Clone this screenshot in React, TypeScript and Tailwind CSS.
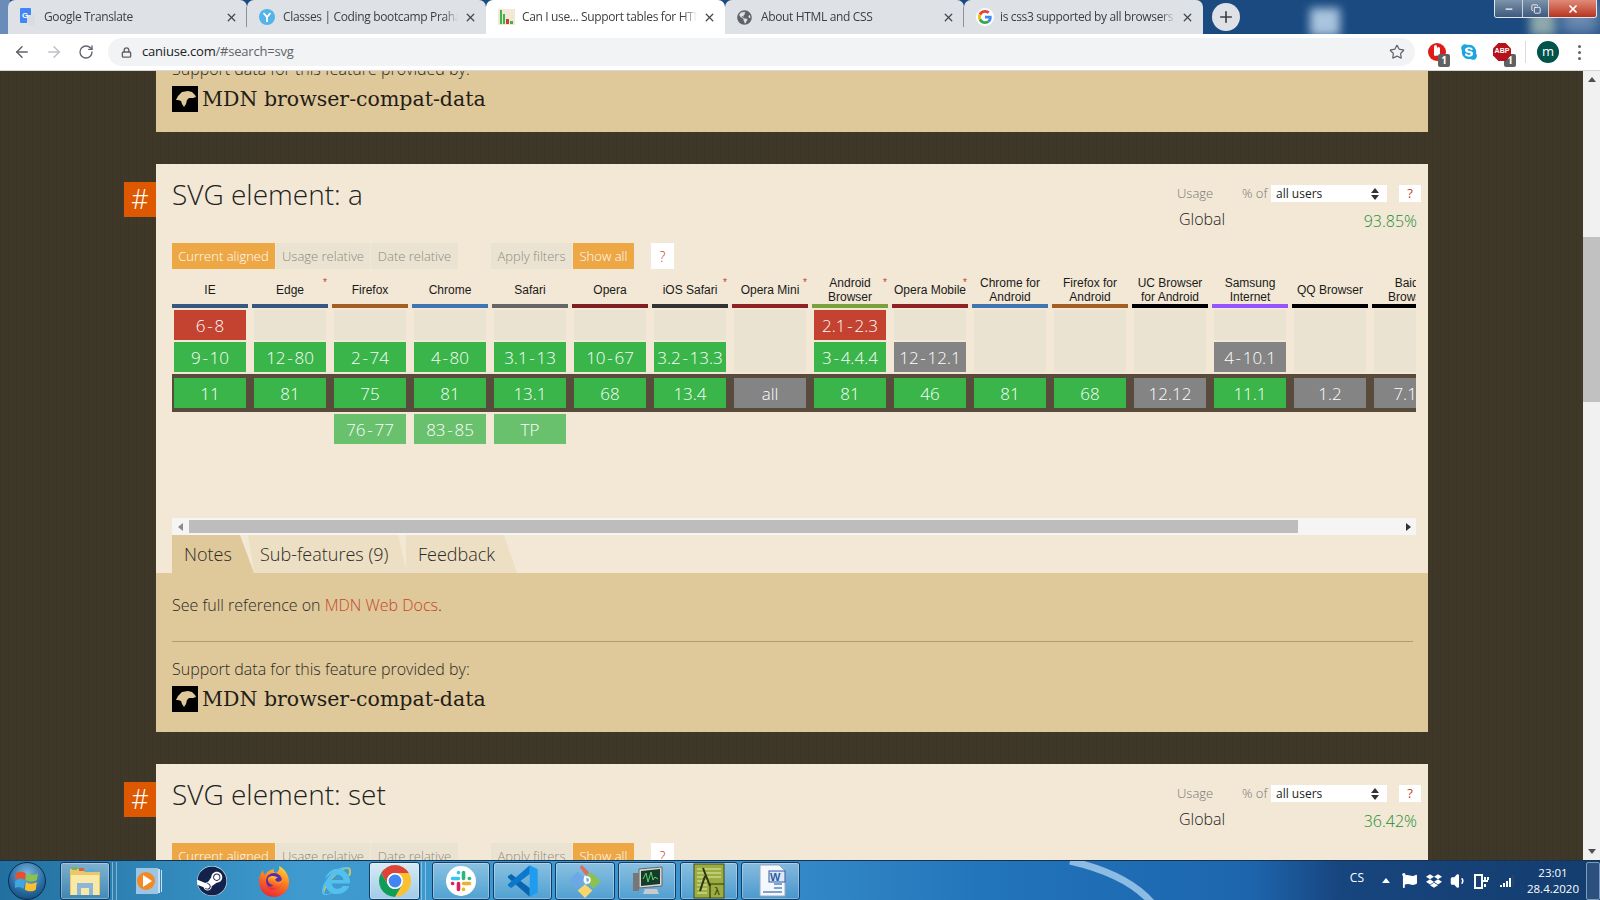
import React from 'react';
import { ArrowLeft, ArrowRight, RotateCw, Lock, Star, X, Plus, Minus, Copy, Volume1 } from 'lucide-react';
import { FaSteam, FaInternetExplorer, FaSkype, FaGlobeAmericas, FaDropbox, FaFlag } from 'react-icons/fa';

type CellKind = 'y' | 'n' | 'u' | 'f';
type Cell = { t: string; k: CellKind };

interface Browser {
  name: string[];
  bar: string;
  star?: boolean;
  past: Cell[];
  current: Cell;
  future?: Cell;
}

const browsers: Browser[] = [
  { name: ['IE'], bar: 'bg-[#375782]', past: [{ t: '6-8', k: 'n' }, { t: '9-10', k: 'y' }], current: { t: '11', k: 'y' } },
  { name: ['Edge'], bar: 'bg-[#375782]', star: true, past: [{ t: '12-80', k: 'y' }], current: { t: '81', k: 'y' } },
  { name: ['Firefox'], bar: 'bg-[#a35e24]', past: [{ t: '2-74', k: 'y' }], current: { t: '75', k: 'y' }, future: { t: '76-77', k: 'f' } },
  { name: ['Chrome'], bar: 'bg-[#4075b2]', past: [{ t: '4-80', k: 'y' }], current: { t: '81', k: 'y' }, future: { t: '83-85', k: 'f' } },
  { name: ['Safari'], bar: 'bg-[#666666]', past: [{ t: '3.1-13', k: 'y' }], current: { t: '13.1', k: 'y' }, future: { t: 'TP', k: 'f' } },
  { name: ['Opera'], bar: 'bg-[#7f1f1f]', past: [{ t: '10-67', k: 'y' }], current: { t: '68', k: 'y' } },
  { name: ['iOS Safari'], bar: 'bg-[#333333]', star: true, past: [{ t: '3.2-13.3', k: 'y' }], current: { t: '13.4', k: 'y' } },
  { name: ['Opera Mini'], bar: 'bg-[#8f2323]', star: true, past: [], current: { t: 'all', k: 'u' } },
  { name: ['Android', 'Browser'], bar: 'bg-[#7ba13c]', star: true, past: [{ t: '2.1-2.3', k: 'n' }, { t: '3-4.4.4', k: 'y' }], current: { t: '81', k: 'y' } },
  { name: ['Opera Mobile'], bar: 'bg-[#8f2323]', star: true, past: [{ t: '12-12.1', k: 'u' }], current: { t: '46', k: 'y' } },
  { name: ['Chrome for', 'Android'], bar: 'bg-[#4075b2]', past: [], current: { t: '81', k: 'y' } },
  { name: ['Firefox for', 'Android'], bar: 'bg-[#a35e24]', past: [], current: { t: '68', k: 'y' } },
  { name: ['UC Browser', 'for Android'], bar: 'bg-black', past: [], current: { t: '12.12', k: 'u' } },
  { name: ['Samsung', 'Internet'], bar: 'bg-[#9654ff]', past: [{ t: '4-10.1', k: 'u' }], current: { t: '11.1', k: 'y' } },
  { name: ['QQ Browser'], bar: 'bg-black', past: [], current: { t: '1.2', k: 'u' } },
  { name: ['Baidu', 'Browser'], bar: 'bg-black', past: [], current: { t: '7.12', k: 'u' } },
];

const cellBg: Record<CellKind, string> = {
  y: 'bg-[#39b54a]',
  n: 'bg-[#c44230]',
  u: 'bg-[#848484]',
  f: 'bg-[#69c16e]',
};

function TranslateIcon() {
  return (
    <svg width="16" height="18" viewBox="0 0 16 18">
      <rect x="0" y="0" width="11" height="15" rx="1" fill="#4285f4" />
      <rect x="7" y="7" width="8" height="10" fill="#dadce0" />
      <text x="2" y="10" fontSize="8" fontWeight="700" fill="#fff" fontFamily="Liberation Sans">G</text>
    </svg>
  );
}

function YIcon() {
  return (
    <svg width="16" height="16" viewBox="0 0 16 16">
      <circle cx="8" cy="8" r="8" fill="#54b4e8" />
      <path d="M4.5 4 8 8.2 11.5 4M8 8v5" stroke="#fff" strokeWidth="1.8" fill="none" />
    </svg>
  );
}

function CaniuseIcon() {
  return (
    <svg width="17" height="16" viewBox="0 0 17 16">
      <rect width="17" height="16" fill="#f2e8d5" />
      <rect x="2" y="1" width="2" height="14" fill="#39b54a" />
      <rect x="5" y="5" width="2" height="10" fill="#39b54a" />
      <rect x="8" y="10" width="3" height="5" fill="#c44230" />
      <rect x="12" y="12" width="3" height="3" fill="#39b54a" />
    </svg>
  );
}

function GoogleIcon() {
  return (
    <span className="flex h-[18px] w-[18px] items-center justify-center rounded-full bg-white">
      <svg width="14" height="14" viewBox="0 0 48 48">
        <path fill="#EA4335" d="M24 9.5c3.54 0 6.71 1.22 9.21 3.6l6.85-6.85C35.9 2.38 30.47 0 24 0 14.62 0 6.51 5.38 2.56 13.22l7.98 6.19C12.43 13.72 17.74 9.5 24 9.5z" />
        <path fill="#4285F4" d="M46.98 24.55c0-1.57-.15-3.09-.38-4.55H24v9.02h12.94c-.58 2.96-2.26 5.48-4.78 7.18l7.73 6c4.51-4.18 7.09-10.36 7.09-17.65z" />
        <path fill="#FBBC05" d="M10.53 28.59c-.48-1.45-.76-2.99-.76-4.59s.27-3.14.76-4.59l-7.98-6.19C.92 16.46 0 20.12 0 24c0 3.88.92 7.54 2.56 10.78l7.97-6.19z" />
        <path fill="#34A853" d="M24 48c6.48 0 11.93-2.13 15.89-5.81l-7.73-6c-2.15 1.45-4.92 2.3-8.16 2.3-6.26 0-11.57-4.22-13.47-9.91l-7.98 6.19C6.51 42.62 14.62 48 24 48z" />
      </svg>
    </span>
  );
}

const tabs = [
  { title: 'Google Translate', icon: <TranslateIcon /> },
  { title: 'Classes | Coding bootcamp Praha', icon: <YIcon /> },
  { title: 'Can I use... Support tables for HTML5', icon: <CaniuseIcon />, active: true },
  { title: 'About HTML and CSS', icon: <FaGlobeAmericas className="text-[15px] text-[#5f6368]" /> },
  { title: 'is css3 supported by all browsers', icon: <GoogleIcon /> },
];

function ChromeIcon() {
  return (
    <svg width="32" height="32" viewBox="4 4 40 40">
      <path fill="#db4437" d="M6.68 14A20 20 0 0 1 41.32 14H24A10 10 0 0 0 15.34 29Z" />
      <path fill="#fbc02d" d="M41.32 14A20 20 0 0 1 24 44L32.66 29A10 10 0 0 0 24 14Z" />
      <path fill="#0f9d58" d="M24 44A20 20 0 0 1 6.68 14L15.34 29A10 10 0 0 0 32.66 29Z" />
      <circle cx="24" cy="24" r="10" fill="#fff" />
      <circle cx="24" cy="24" r="8" fill="#4285f4" />
    </svg>
  );
}

function MdnIcon() {
  return (
    <span className="flex h-[26px] w-[26px] items-center justify-center bg-black">
      <svg width="21" height="18" viewBox="0 0 21 18">
        <path fill="#dfc89a" d="M1 10 3 6l4-4 6-1 4 1 3 3 1 2-3 1h-4l-2 2-1 4-2 3-2-3-1-3-3-1z" />
      </svg>
    </span>
  );
}

function WindowsOrb() {
  return (
    <span className="flex h-[38px] w-[38px] items-center justify-center rounded-full border border-[#0b2c50] bg-[radial-gradient(circle_at_50%_30%,#7fb6dc,#2a6fa6_55%,#0c3a63)]">
      <svg width="24" height="22" viewBox="0 0 22 20">
        <path fill="#e8502a" d="M1 3c3-2 6-2 9 0l-1 6c-3-2-6-2-9 0z" />
        <path fill="#8bc34a" d="M11 3c3 2 7 2 10 0l-1 6c-3 2-7 2-10 0z" />
        <path fill="#3fa7e0" d="M0 10c3-2 6-2 9 0l-1 7c-3-2-6-2-9 0z" />
        <path fill="#fbc02d" d="M10 11c3 2 6 2 10 0l-1 7c-3 2-6 2-10 0z" />
      </svg>
    </span>
  );
}

function FolderIcon() {
  return (
    <svg width="34" height="32" viewBox="0 0 34 32">
      <path fill="#e9c868" d="M2 4h12l3 3h15v23H2z" />
      <path fill="#f9e9a8" d="M3 10h28v20H3z" />
      <rect x="4" y="2" width="5" height="3" fill="#7fb05a" />
      <rect x="11" y="3" width="5" height="3" fill="#d9604a" />
      <rect x="21" y="4" width="5" height="3" fill="#5aa9e6" />
      <path fill="#8fb6d6" d="M9 18h16v12H9z" />
      <path fill="#f9e9a8" d="M13 23h8v7h-8z" />
    </svg>
  );
}

function MediaIcon() {
  return (
    <svg width="28" height="32" viewBox="0 0 28 32">
      <rect x="1" y="3" width="22" height="26" fill="#9cc5e4" />
      <rect x="23" y="4" width="2" height="24" fill="#c9e0f1" />
      <rect x="26" y="5" width="1" height="22" fill="#c9e0f1" />
      <circle cx="11" cy="16" r="9" fill="#f08a24" />
      <path d="M8 10v12l9-6z" fill="#fff" />
    </svg>
  );
}

function FirefoxIcon() {
  return (
    <svg width="30" height="32" viewBox="0 0 30 32">
      <defs>
        <linearGradient id="fx" x1="0.7" y1="0" x2="0.3" y2="1">
          <stop offset="0" stopColor="#ffd23a" />
          <stop offset="0.45" stopColor="#ff7a1f" />
          <stop offset="1" stopColor="#e5263a" />
        </linearGradient>
      </defs>
      <path fill="url(#fx)" d="M20 1c6 3 10 9 10 16 0 8-6 15-15 15S0 25 0 16C0 11 2 8 4 5c0 3 1 4 2 5 2-4 6-5 9-6-1 2 0 3 2 4 3-2 4-4 3-7z" />
      <circle cx="15" cy="16" r="8" fill="#5c2ba8" />
      <path fill="url(#fx)" d="M9 13c3-3 8-2 10 0-3 0-3 2-2 3 3 2 6 0 6-2 1 5-3 11-9 11-3 0-6-2-7-5 2 2 6 2 7 0-3 0-6-3-5-7z" />
    </svg>
  );
}

function IeIcon() {
  return (
    <span className="relative flex h-[32px] w-[32px] items-center justify-center">
      <svg className="absolute inset-0" width="32" height="32" viewBox="0 0 32 32" fill="none">
        <path d="M27 3C20 3 6 16 3 28" stroke="#e8c83a" strokeWidth="2" />
        <path d="M27 3c3 0 4 3 2 8" stroke="#e8c83a" strokeWidth="2" />
      </svg>
      <FaInternetExplorer className="relative text-[28px] text-[#54c0ee]" />
    </span>
  );
}

function SlackIcon() {
  return (
    <span className="flex h-[30px] w-[30px] items-center justify-center rounded-full bg-white">
      <svg width="22" height="22" viewBox="0 0 22 22" strokeWidth="3.6" strokeLinecap="round" fill="none">
        <path stroke="#36c5f0" d="M2.5 8.5h6M8.5 2.5v.2" />
        <path stroke="#2eb67d" d="M13.5 2.5v6M19.5 8.5h-.2" />
        <path stroke="#ecb22e" d="M19.5 13.5h-6M13.5 19.5v-.2" />
        <path stroke="#e01e5a" d="M8.5 19.5v-6M2.5 13.5h.2" />
      </svg>
    </span>
  );
}

function CodeIcon() {
  return (
    <svg width="32" height="32" viewBox="0 0 100 100">
      <polygon fill="#0865b0" points="3,40 3,35 13,28 71,72 71,99" />
      <polygon fill="#0a78cc" points="71,1 71,28 13,72 3,65 3,60" />
      <polygon fill="#1f9cf0" points="71,1 96,13 96,87 71,99" />
    </svg>
  );
}

function GitIcon() {
  return (
    <svg width="34" height="34" viewBox="0 0 32 32">
      <path fill="#d9705e" d="M11 3l2-2 7 7-3 3z" />
      <path fill="#6da7e8" d="M9 7l7 7-8 8-7-7z" />
      <path fill="#8cc152" d="M22 8l9 8-7 7-5-5c2-3 1-6-2-7z" />
      <path fill="#f5d76e" d="M16 19l7 6-7 7-7-7z" />
      <path d="M16 11l1 8" stroke="#fff" strokeWidth="1.6" />
      <circle cx="18" cy="15" r="2.6" fill="none" stroke="#fff" strokeWidth="1.6" />
    </svg>
  );
}

function MonitorIcon() {
  return (
    <svg width="32" height="32" viewBox="0 0 32 32">
      <path d="M8 4l23-2v19L8 23z" fill="#d8d8d8" stroke="#666" />
      <path d="M10 6l19-2v15l-19 2z" fill="#153b2a" />
      <path d="M12 14l3-6 2 9 3-10 2 8 2-3 3 2" stroke="#5fd36a" fill="none" />
      <rect x="2" y="8" width="6" height="18" fill="#777" />
      <path d="M14 24h12l2 5H12z" fill="#c9c9c9" />
    </svg>
  );
}

function LambdaIcon() {
  return (
    <svg width="32" height="36" viewBox="0 0 32 36">
      <rect x="1" y="1" width="30" height="34" fill="#9cac3f" stroke="#3e4a1c" />
      <path d="M4 6h24M4 10h24M4 14h24M4 18h10M4 22h10M4 26h10M4 30h10" stroke="#c8d68a" strokeWidth="1.6" />
      <path d="M10 5l7 18M12 13l-5 15" stroke="#2c3414" strokeWidth="2" fill="none" />
      <path d="M17 21v14M17 21h14" stroke="#2c3414" strokeWidth="1.2" />
      <text x="21" y="32" fontSize="10" fill="#2c3414" fontFamily="DejaVu Sans">λ</text>
    </svg>
  );
}

function WordIcon() {
  return (
    <svg width="32" height="34" viewBox="0 0 32 34">
      <path d="M5 1h19l6 6v25H5z" fill="#f4f7fb" stroke="#9ab" />
      <path d="M19 20h8M19 24h8M8 28h19" stroke="#5a86c5" strokeWidth="1.5" />
      <rect x="14" y="7" width="16" height="11" fill="#dfe8f4" stroke="#2b5ca8" />
      <text x="15" y="16.5" fontSize="11" fontWeight="700" fill="#2b5ca8" fontFamily="Liberation Sans">W</text>
    </svg>
  );
}

const TableCell = ({ cell }: { cell: Cell }) => (
  <div className={`ml-[2px] flex h-[30px] w-[72px] items-center justify-center whitespace-nowrap pt-[1px] text-[17px] font-light text-white ${cellBg[cell.k]}`}>
    {cell.t.replace('-', '\u200a-\u200a')}
  </div>
);

const SupportTable = () => (
  <div className="flex h-[242px] w-[1244px] overflow-hidden">
    {browsers.map((b) => (
      <div key={b.name.join(' ')} className="w-[80px] shrink-0">
        <div className="relative flex h-[28px] w-[76px] flex-col items-center justify-center font-['Liberation_Sans',sans-serif] text-[12px] leading-[14px] text-[#1a1a1a]">
          {b.name.map((line) => (
            <span key={line} className="whitespace-nowrap">{line}</span>
          ))}
          {b.star && <span className="absolute right-[1px] top-0 text-[10px] text-[#c44230]">*</span>}
        </div>
        <div className={`h-[4px] w-[76px] ${b.bar}`} />
        <div className="mt-[2px] flex h-[62px] flex-col gap-[2px]">
          {b.past.length < 2 && <div className="ml-[2px] w-[72px] flex-1 bg-[#ebe3d1]" />}
          {b.past.map((c) => (
            <TableCell key={c.t} cell={c} />
          ))}
        </div>
        <div className="mt-[2px] bg-[#584b3b] py-[4px]">
          <TableCell cell={b.current} />
        </div>
        {b.future && (
          <div className="mt-[2px]">
            <TableCell cell={b.future} />
          </div>
        )}
      </div>
    ))}
  </div>
);

const MdnFooter = () => (
  <div>
    <div className="h-[24px] text-[16px] font-light leading-[24px] text-[#2b2a26]">Support data for this feature provided by:</div>
    <div className="mt-[5px] flex items-center gap-[4px]">
      <MdnIcon />
      <span className="font-['DejaVu_Serif',serif] text-[20.5px] leading-[26px] text-[#1f1d18]">MDN browser-compat-data</span>
    </div>
  </div>
);

const CardHeader = ({ title, usage }: { title: string; usage: string }) => (
  <div className="relative flex h-[79px] justify-between pl-[16px] pr-[7px]">
    <div className="absolute left-[-32px] top-[18px] flex h-[35px] w-[32px] items-center justify-center bg-[#dd5800] text-[27px] font-light text-white">#</div>
    <h2 className="pt-[10px] text-[28px] font-light leading-[40px] text-[#222]">{title}</h2>
    <div className="w-[244px] pt-[21px]">
      <div className="flex h-[17px] items-center">
        <span className="w-[65px] pt-[1px] text-[13px] font-light text-[#777]">Usage</span>
        <span className="w-[29px] pt-[1px] text-[13px] font-light text-[#777]">% of</span>
        <div className="flex h-[17px] w-[116px] items-center justify-between bg-white pl-[5px] pr-[8px] pt-[1px] text-[12px] text-[#222]">
          all users
          <svg width="8" height="12" viewBox="0 0 8 12" fill="#333"><path d="M4 0l4 5H0zM4 12 0 7h8z" /></svg>
        </div>
        <div className="ml-[12px] flex h-[17px] w-[22px] items-center justify-center bg-white text-[13px] text-[#c44230]">?</div>
      </div>
      <div className="flex justify-between pl-[2px] pr-[4px]">
        <span className="mt-[6px] text-[16px] font-light leading-[22px] text-[#222]">Global</span>
        <span className="mt-[8px] text-[16px] font-light leading-[22px] text-[#1a8f35]">{usage}</span>
      </div>
    </div>
  </div>
);

const FilterBar = () => (
  <div className="ml-[16px] flex h-[26px] items-stretch pt-0 text-[13px] font-light">
    <div className="flex w-[103px] items-center justify-center bg-[#eda745] pt-[1px] text-white">Current aligned</div>
    <div className="ml-[1px] flex w-[94px] items-center justify-center bg-[#ebe3d1] pt-[1px] text-[#8f8a7e]">Usage relative</div>
    <div className="ml-[1px] flex w-[87px] items-center justify-center bg-[#ebe3d1] pt-[1px] text-[#8f8a7e]">Date relative</div>
    <div className="ml-[33px] flex w-[81px] items-center justify-center bg-[#ebe3d1] pt-[1px] text-[#8f8a7e]">Apply filters</div>
    <div className="ml-[1px] flex w-[61px] items-center justify-center bg-[#eda745] pt-[1px] text-white">Show all</div>
    <div className="ml-[17px] flex w-[23px] items-center justify-center bg-white text-[14px] text-[#c44230]">?</div>
  </div>
);

const TableScrollbar = () => (
  <div className="flex h-[17px] w-[1244px] items-center bg-[#f5f5f5]">
    <div className="flex w-[17px] justify-center">
      <svg width="5" height="8" viewBox="0 0 5 8" fill="#8a8a8a"><path d="M5 0v8L0 4z" /></svg>
    </div>
    <div className="h-[13px] w-[1109px] bg-[#bdbdbd]" />
    <div className="ml-auto flex w-[17px] justify-center pl-[1px]">
      <svg width="5" height="8" viewBox="0 0 5 8" fill="#333"><path d="M0 0v8l5-4z" /></svg>
    </div>
  </div>
);

const NotesTabs = () => (
  <div className="ml-[16px] flex h-[38px] text-[18px] font-light text-[#2b2a26]">
    <div className="w-[82px] bg-[#dfc89a] pl-[12px] pt-[6px] [clip-path:polygon(0_0,68px_0,100%_100%,0_100%)]">Notes</div>
    <div className="ml-[-6px] w-[159px] bg-[#ecdfc3] pl-[12px] pt-[6px] [clip-path:polygon(0_0,150px_0,100%_100%,6px_100%)]">Sub-features (9)</div>
    <div className="ml-[-1px] w-[111px] bg-[#ecdfc3] pl-[12px] pt-[6px] [clip-path:polygon(0_0,98px_0,100%_100%,0_100%)]">Feedback</div>
  </div>
);

const TitleBar = () => (
  <div className="relative h-[34px] shrink-0 overflow-hidden bg-[#1a4a80]">
    <div className="absolute left-0 top-0 h-[34px] w-[10px] bg-[#6a8cb8]" />
    <div className="absolute left-[1310px] top-[8px] h-[28px] w-[30px] bg-[#a9c4de] blur-[5px]" />
    <div className="absolute left-[1530px] top-[10px] h-[26px] w-[26px] bg-[#8ea9ac] blur-[5px]" />
    <div className="absolute left-[1560px] top-0 h-[34px] w-[40px] bg-[#6d8cb0] blur-[8px]" />
    <div className="relative flex h-[34px] pl-[8px]">
      {tabs.map((t, i) => (
        <div
          key={t.title}
          className={`relative flex h-[34px] w-[239px] items-center rounded-t-[7px] pl-[12px] pr-[9px] ${t.active ? 'bg-white' : 'bg-[#dee1e6]'} ${i === 0 || i === 3 ? "after:absolute after:right-0 after:top-[7px] after:h-[20px] after:w-px after:bg-[#8e9196]" : ''}`}
        >
          <span className="flex w-[24px] shrink-0 items-center">{t.icon}</span>
          <span className="flex-1 overflow-hidden whitespace-nowrap font-['Open_Sans',sans-serif] text-[12px] tracking-[-0.35px] text-[#3c4043] [mask-image:linear-gradient(to_right,black_92%,transparent)]">{t.title}</span>
          <X size={13} strokeWidth={2.4} className="ml-[6px] shrink-0 text-[#45484c]" />
        </div>
      ))}
      <div className="ml-[9px] mt-[3px] flex h-[28px] w-[28px] items-center justify-center rounded-full bg-[#dee1e6]">
        <Plus size={18} strokeWidth={2.2} className="text-[#3c4043]" />
      </div>
    </div>
    <div className="absolute right-[3px] top-0 flex h-[18px] overflow-hidden rounded-b-[3px] border border-t-0 border-[#dfe6ee]">
      <div className="flex w-[27px] items-center justify-center bg-gradient-to-b from-[#7d93ab] to-[#3e5a7c]"><Minus size={10} strokeWidth={3} className="text-white" /></div>
      <div className="flex w-[27px] items-center justify-center border-x border-[#c8d4e0] bg-gradient-to-b from-[#7d93ab] to-[#3e5a7c]"><Copy size={10} strokeWidth={2} className="text-white" /></div>
      <div className="flex w-[47px] items-center justify-center bg-gradient-to-b from-[#e08a78] to-[#b5321e]"><X size={12} strokeWidth={3.5} className="text-white" /></div>
    </div>
  </div>
);

const Toolbar = () => (
  <div className="flex h-[37px] shrink-0 items-center border-b border-[#d6d6d6] bg-white">
    <ArrowLeft size={18} strokeWidth={2} className="ml-[13px] text-[#5f6368]" />
    <ArrowRight size={18} strokeWidth={2} className="ml-[14px] text-[#bdc1c6]" />
    <RotateCw size={16} strokeWidth={2} className="ml-[15px] text-[#5f6368]" />
    <div className="ml-[14px] flex h-[28px] w-[1307px] items-center rounded-full bg-[#f1f3f4] pl-[13px] pr-[10px]">
      <Lock size={11} strokeWidth={3} className="text-[#5f6368]" />
      <span className="ml-[10px] font-['Open_Sans',sans-serif] text-[13px] tracking-[-0.2px] text-[#202124]">
        caniuse.com<span className="text-[#5f6368]">/#search=svg</span>
      </span>
      <Star size={16} strokeWidth={1.8} className="ml-auto text-[#5f6368]" />
    </div>
    <div className="relative ml-[13px] h-[18px] w-[18px] rounded-full bg-[#e01b1b]">
      <span className="absolute left-[6px] top-[2px] h-[11px] w-[3px] rounded-full bg-white" />
      <span className="absolute left-[9px] top-[4px] h-[9px] w-[3px] rounded-full bg-white" />
      <span className="absolute left-[10px] top-[11px] flex h-[13px] w-[12px] items-center justify-center rounded-[2px] bg-[#616161] text-[10px] font-bold text-white">1</span>
    </div>
    <FaSkype className="ml-[14px] text-[18px] text-[#1da5e0]" />
    <div className="relative ml-[15px] h-[18px] w-[18px] bg-[#b5121b] [clip-path:polygon(30%_0,70%_0,100%_30%,100%_70%,70%_100%,30%_100%,0_70%,0_30%)]">
      <span className="absolute left-0 top-[3px] w-[18px] text-center font-['Liberation_Sans',sans-serif] text-[7px] font-bold leading-[10px] text-white">ABP</span>
    </div>
    <span className="ml-[-7px] mt-[17px] flex h-[13px] w-[12px] items-center justify-center rounded-[2px] bg-[#616161] text-[10px] font-bold text-white">1</span>
    <div className="ml-[9px] h-[22px] w-px bg-[#dadce0]" />
    <div className="ml-[11px] flex h-[22px] w-[22px] items-center justify-center rounded-full bg-[#00544a] text-[13px] text-white">m</div>
    <div className="ml-[19px] flex flex-col gap-[3px]">
      <span className="h-[3px] w-[3px] rounded-full bg-[#5f6368]" />
      <span className="h-[3px] w-[3px] rounded-full bg-[#5f6368]" />
      <span className="h-[3px] w-[3px] rounded-full bg-[#5f6368]" />
    </div>
  </div>
);

const PageScrollbar = () => (
  <div className="flex w-[17px] shrink-0 flex-col bg-[#f1f1f1]">
    <div className="flex h-[17px] items-center justify-center">
      <svg width="8" height="5" viewBox="0 0 8 5" fill="#505050"><path d="M4 0l4 5H0z" /></svg>
    </div>
    <div className="mt-[149px] h-[165px] bg-[#c1c1c1]" />
    <div className="mt-auto flex h-[17px] items-center justify-center">
      <svg width="8" height="5" viewBox="0 0 8 5" fill="#505050"><path d="M0 0h8L4 5z" /></svg>
    </div>
  </div>
);

const TaskButton = ({ children, className }: { children: React.ReactNode; className: string }) => (
  <div className={`flex h-[38px] items-center justify-center rounded-[3px] border border-[#123c68] shadow-[inset_0_0_0_1px_rgba(255,255,255,0.3)] ${className}`}>
    {children}
  </div>
);

const Gripper = ({ className }: { className: string }) => (
  <div className={`h-[38px] w-[5px] border-x border-white/40 ${className}`} />
);

const Taskbar = () => (
  <div className="relative flex h-[40px] shrink-0 items-center overflow-hidden border-t border-[#16324f] bg-[linear-gradient(90deg,#22709f_0,#3e9acf_300px,#3c94cc_700px,#2173ba_1000px,#1d66ae_1250px,#17457e_1340px,#143d6e_100%)]">
    <svg className="absolute left-[1060px] top-0" width="100" height="40" viewBox="0 0 100 40" fill="none">
      <path d="M10 0C45 8 75 22 92 42" stroke="#a8d0ef" strokeWidth="7" opacity="0.8" />
    </svg>
    <div className="relative ml-[8px] flex w-[38px] items-center justify-center"><WindowsOrb /></div>
    <TaskButton className="ml-[14px] w-[50px] bg-gradient-to-b from-white/40 to-white/10"><FolderIcon /></TaskButton>
    <Gripper className="ml-[2px] mr-[1px]" />
    <div className="flex h-[38px] w-[251px] items-center">
      <div className="flex w-[62px] justify-center"><MediaIcon /></div>
      <div className="flex w-[63px] justify-center">
        <span className="flex h-[30px] w-[30px] items-center justify-center rounded-full bg-white"><FaSteam className="text-[30px] text-[#12224a]" /></span>
      </div>
      <div className="flex w-[62px] justify-center"><FirefoxIcon /></div>
      <div className="flex w-[62px] justify-center"><IeIcon /></div>
    </div>
    <TaskButton className="w-[51px] bg-gradient-to-b from-white/80 to-white/50"><ChromeIcon /></TaskButton>
    <Gripper className="ml-[1px] mr-[6px]" />
    <TaskButton className="w-[58px] bg-gradient-to-b from-white/40 to-white/10"><SlackIcon /></TaskButton>
    <TaskButton className="ml-[3px] w-[59px] bg-gradient-to-b from-white/40 to-white/10"><CodeIcon /></TaskButton>
    <TaskButton className="ml-[3px] w-[60px] bg-gradient-to-b from-white/40 to-white/10"><GitIcon /></TaskButton>
    <TaskButton className="ml-[3px] w-[58px] bg-gradient-to-b from-white/40 to-white/10"><MonitorIcon /></TaskButton>
    <TaskButton className="ml-[4px] w-[58px] bg-gradient-to-b from-white/40 to-white/10"><LambdaIcon /></TaskButton>
    <TaskButton className="ml-[3px] w-[59px] bg-gradient-to-b from-white/40 to-white/10"><WordIcon /></TaskButton>
    <div className="relative ml-auto flex h-full items-center text-white">
      <span className="mt-[-5px] font-['Open_Sans',sans-serif] text-[12px]">CS</span>
      <svg className="ml-[18px]" width="8" height="5" viewBox="0 0 8 5" fill="#fff"><path d="M4 0l4 5H0z" /></svg>
      <FaFlag className="ml-[12px] text-[15px]" />
      <FaDropbox className="ml-[9px] text-[16px]" />
      <Volume1 size={18} fill="#fff" className="ml-[8px]" />
      <svg className="ml-[5px]" width="16" height="18" viewBox="0 0 16 18" fill="none" stroke="#fff" strokeWidth="2">
        <path d="M2 3h7v13H2z" />
        <path d="M9 9h6M12 5v3M15 5v3M12 12v3" />
      </svg>
      <svg className="ml-[11px]" width="16" height="12" viewBox="0 0 16 12" fill="#fff">
        <path d="M0 10h2v2H0zM3 8h2v4H3zM6 6h2v6H6zM9 3h2v9H9z" />
        <path d="M12 0h2v12h-2z" fill="#24476e" />
      </svg>
      <div className="ml-[4px] flex w-[66px] flex-col items-center font-['Open_Sans',sans-serif] text-[11.5px] leading-[16px]">
        <span>23:01</span>
        <span>28.4.2020</span>
      </div>
      <div className="h-[38px] w-[14px] rounded-[2px] border border-[#7b9cbd] bg-white/10" />
    </div>
  </div>
);

export default function App() {
  return (
    <div className="flex h-screen w-full flex-col overflow-hidden font-['Open_Sans',sans-serif]">
      <TitleBar />
      <Toolbar />
      <div className="flex min-h-0 flex-1">
        <main className="min-w-0 flex-1 overflow-hidden bg-[#3f3829] bg-[repeating-linear-gradient(90deg,rgba(0,0,0,0.06)_0,rgba(0,0,0,0.06)_1px,transparent_1px,transparent_8px)] pl-[156px]">
          <div className="mt-[-14px] w-[1272px] bg-[#dfc89a] pb-[20px] pl-[16px]">
            <MdnFooter />
          </div>

          <section className="mt-[32px] w-[1272px] bg-[#f2e8d5]">
            <CardHeader title="SVG element: a" usage="93.85%" />
            <FilterBar />
            <div className="ml-[16px] mt-[7px]">
              <SupportTable />
              <TableScrollbar />
            </div>
            <NotesTabs />
            <div className="bg-[#dfc89a] px-[16px] pb-[20px]">
              <p className="pt-[20px] text-[16px] font-light leading-[24px] text-[#2b2a26]">
                See full reference on <span className="text-[#c4472a]">MDN Web Docs</span>.
              </p>
              <hr className="mb-[15px] mr-[-1px] mt-[24px] border-[#b49a72]" />
              <MdnFooter />
            </div>
          </section>

          <section className="mt-[32px] w-[1272px] bg-[#f2e8d5]">
            <CardHeader title="SVG element: set" usage="36.42%" />
            <FilterBar />
          </section>
        </main>
        <PageScrollbar />
      </div>
      <Taskbar />
    </div>
  );
}
